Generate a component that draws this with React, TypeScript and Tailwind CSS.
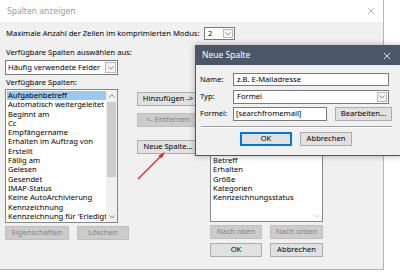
import React from "react";

function Chevron({ className, up }: { className?: string; up?: boolean }) {
  return (
    <svg viewBox="0 0 8 5" className={className}>
      <path
        d={up ? "M0.5 4.5 L4 1 L7.5 4.5" : "M0.5 0.5 L4 4 L7.5 0.5"}
        fill="none"
        stroke="currentColor"
        strokeWidth="1"
      />
    </svg>
  );
}

function Btn({
  children,
  className = "",
  disabled,
  primary,
}: {
  children: React.ReactNode;
  className?: string;
  disabled?: boolean;
  primary?: boolean;
}) {
  const look = disabled
    ? "border-[#bfbfbf] bg-[#cccccc] text-[#838383]"
    : primary
      ? "border-[#0078d7] bg-[#e1e1e1] text-black shadow-[inset_0_0_0_1px_#0078d7]"
      : "border-[#adadad] bg-[#e1e1e1] text-black";
  return (
    <div
      className={`flex h-[14px] shrink-0 items-center justify-center whitespace-nowrap border ${look} ${className}`}
    >
      {children}
    </div>
  );
}

const available = [
  "Aufgabenbetreff",
  "Automatisch weitergeleitet",
  "Beginnt am",
  "Cc",
  "Empfängername",
  "Erhalten im Auftrag von",
  "Erstellt",
  "Fällig am",
  "Gelesen",
  "Gesendet",
  "IMAP-Status",
  "Keine AutoArchivierung",
  "Kennzeichnung",
  "Kennzeichnung für 'Erledigt'",
];

// the first rows of this list sit under the "Neue Spalte" window
const shown = ["Betreff", "Erhalten", "Größe", "Kategorien", "Kennzeichnungsstatus"];

export default function App() {
  return (
    <div className="relative h-[273px] w-[400px] overflow-hidden bg-white font-['Noto_Sans',sans-serif] text-[7.6px] text-black">
      {/* main dialog */}
      <div className="flex h-[270px] w-[384px] flex-col border-r border-b border-[#b5b5b5] bg-[#f0f0f0]">
        <div className="flex h-[22px] shrink-0 items-center justify-between bg-white pl-[7px] pr-[8px]">
          <span className="text-[8.5px] text-[#9a9a9a]">Spalten anzeigen</span>
          <svg viewBox="0 0 10 10" className="h-[8px] w-[8px] text-[#9a9a9a]">
            <path d="M1 1 L9 9 M9 1 L1 9" stroke="currentColor" strokeWidth="0.9" />
          </svg>
        </div>

        <div className="flex flex-col px-[5px] pt-[5px]">
          <div className="flex h-[13px] items-center">
            <span className="pl-[1px]">Maximale Anzahl der Zeilen im komprimierten Modus:</span>
            <div className="ml-auto mr-[143px] flex h-[13px] w-[31px] items-center border border-[#7a7a7a] bg-white">
              <span className="flex-1 pl-[3px]">2</span>
              <span className="mr-[1px] flex h-[9px] w-[10px] items-center justify-center border border-[#b8b8b8] bg-[#f3f3f3]">
                <Chevron className="w-[6px] text-[#707070]" />
              </span>
            </div>
          </div>

          <div className="mt-[7px] h-[10px] pl-[1px] leading-[10px]">Verfügbare Spalten auswählen aus:</div>

          <div className="mt-[3px] flex h-[15px] w-[113px] items-center border border-[#7a7a7a] bg-white">
            <span className="flex-1 pl-[2px]">Häufig verwendete Felder</span>
            <span className="mr-[1px] flex h-[11px] w-[11px] items-center justify-center border border-[#b8b8b8] bg-[#f3f3f3]">
              <Chevron className="w-[6px] text-[#707070]" />
            </span>
          </div>

          <div className="mt-[2px] h-[10px] pl-[1px] leading-[10px]">Verfügbare Spalten:</div>

          <div className="mt-[2px] flex">
            {/* left column */}
            <div className="flex w-[113px] flex-col">
              <div className="flex h-[134px] border border-[#828790] bg-white">
                <div className="flex-1 overflow-hidden pt-[1px] pl-[1px]">
                  {available.map((t, i) => (
                    <div
                      key={t}
                      className={`h-[9.3px] whitespace-nowrap pl-[1px] leading-[9.3px] ${i === 0 ? "bg-[#99c9ef]" : ""}`}
                    >
                      {t}
                    </div>
                  ))}
                </div>
                <div className="flex w-[11px] flex-col bg-[#f0f0f0]">
                  <div className="flex h-[12px] items-center justify-center">
                    <Chevron up className="w-[6px] text-[#606060]" />
                  </div>
                  <div className="mx-[1px] h-[75px] bg-[#cdcdcd]" />
                  <div className="flex-1" />
                  <div className="flex h-[11px] items-center justify-center">
                    <Chevron className="w-[6px] text-[#606060]" />
                  </div>
                </div>
              </div>
              <div className="mt-[3px] flex w-max gap-[8px]">
                <Btn disabled className="w-[64px]">
                  Eigenschaften
                </Btn>
                <Btn disabled className="w-[52px]">
                  Löschen
                </Btn>
              </div>
            </div>

            {/* middle column */}
            <div className="ml-[19px] flex w-[62px] flex-col pt-[3px]">
              <Btn className="h-[13px]">Hinzufügen -&gt;</Btn>
              <Btn disabled className="mt-[7px] h-[13px]">
                &lt;- Entfernen
              </Btn>
              <Btn className="mt-[13px] h-[13px]">Neue Spalte...</Btn>
            </div>

            {/* right column */}
            <div className="ml-[11px] flex w-[113px] flex-col">
              <div className="flex h-[133px] border border-[#828790] bg-white">
                <div className="flex-1 overflow-hidden pt-[66px] pl-[2px]">
                  {shown.map((t) => (
                    <div key={t} className="h-[9.3px] whitespace-nowrap leading-[9.3px]">
                      {t}
                    </div>
                  ))}
                </div>
                <div className="flex w-[11px] flex-col justify-end">
                  <div className="flex h-[11px] items-center justify-center">
                    <Chevron className="w-[6px] text-[#c8c8c8]" />
                  </div>
                </div>
              </div>
              <div className="mt-[3px] flex w-max gap-[8px]">
                <Btn disabled className="w-[52px]">
                  Nach oben
                </Btn>
                <Btn disabled className="w-[53px]">
                  Nach unten
                </Btn>
              </div>
              <div className="mt-[4px] flex w-max gap-[8px]">
                <Btn className="w-[52px]">OK</Btn>
                <Btn className="w-[53px]">Abbrechen</Btn>
              </div>
            </div>
          </div>
        </div>
      </div>

      {/* red arrow */}
      <svg viewBox="0 0 33 33" className="absolute left-[135px] top-[149px] h-[33px] w-[33px]">
        <path d="M3 30 L28 5" stroke="#e3262d" strokeWidth="1.3" />
        <path d="M30 3 L23.5 6.5 L26.5 9.5 Z" fill="#e3262d" />
      </svg>

      {/* Neue Spalte popup */}
      <div className="absolute left-[195px] top-[45px] flex h-[111px] w-[207px] flex-col border border-[#4b5666] bg-[#f0f0f0] shadow-[0_0_6px_rgba(0,0,0,0.3)]">
        <div className="flex h-[19px] shrink-0 items-center justify-between bg-[#4b5666] pl-[6px] pr-[10px]">
          <span className="text-[8.5px] text-white">Neue Spalte</span>
          <svg viewBox="0 0 10 10" className="h-[8px] w-[8px] text-white">
            <path d="M1 1 L9 9 M9 1 L1 9" stroke="currentColor" strokeWidth="1" />
          </svg>
        </div>
        <div className="flex flex-col pl-[4px] pt-[8px]">
          <div className="flex h-[13px] items-center">
            <span className="w-[33px]">Name:</span>
            <div className="flex h-[13px] w-[156px] items-center border border-[#7a7a7a] bg-white pl-[3px]">
              z.B. E-Mailadresse
            </div>
          </div>
          <div className="mt-[4px] flex h-[14px] items-center">
            <span className="w-[33px]">Typ:</span>
            <div className="flex h-[14px] w-[156px] items-center border border-[#7a7a7a] bg-white">
              <span className="flex-1 pl-[3px]">Formel</span>
              <span className="mr-[1px] flex h-[10px] w-[10px] items-center justify-center border border-[#b8b8b8] bg-[#f3f3f3]">
                <Chevron className="w-[6px] text-[#707070]" />
              </span>
            </div>
          </div>
          <div className="mt-[3px] flex h-[14px] items-center">
            <span className="w-[33px]">Formel:</span>
            <div className="flex h-[14px] w-[94px] items-center border border-[#7a7a7a] bg-white pl-[2px]">
              [searchfromemail]
            </div>
            <Btn className="ml-[8px] w-[57px]">Bearbeiten...</Btn>
          </div>
          <div className="mt-[5px] ml-[1px] w-[191px] border-t border-b border-t-[#a0a0a0] border-b-white" />
          <div className="mt-[4px] flex gap-[8px] pl-[40px]">
            <Btn primary className="w-[52px]">
              OK
            </Btn>
            <Btn className="w-[52px]">Abbrechen</Btn>
          </div>
        </div>
      </div>
    </div>
  );
}
